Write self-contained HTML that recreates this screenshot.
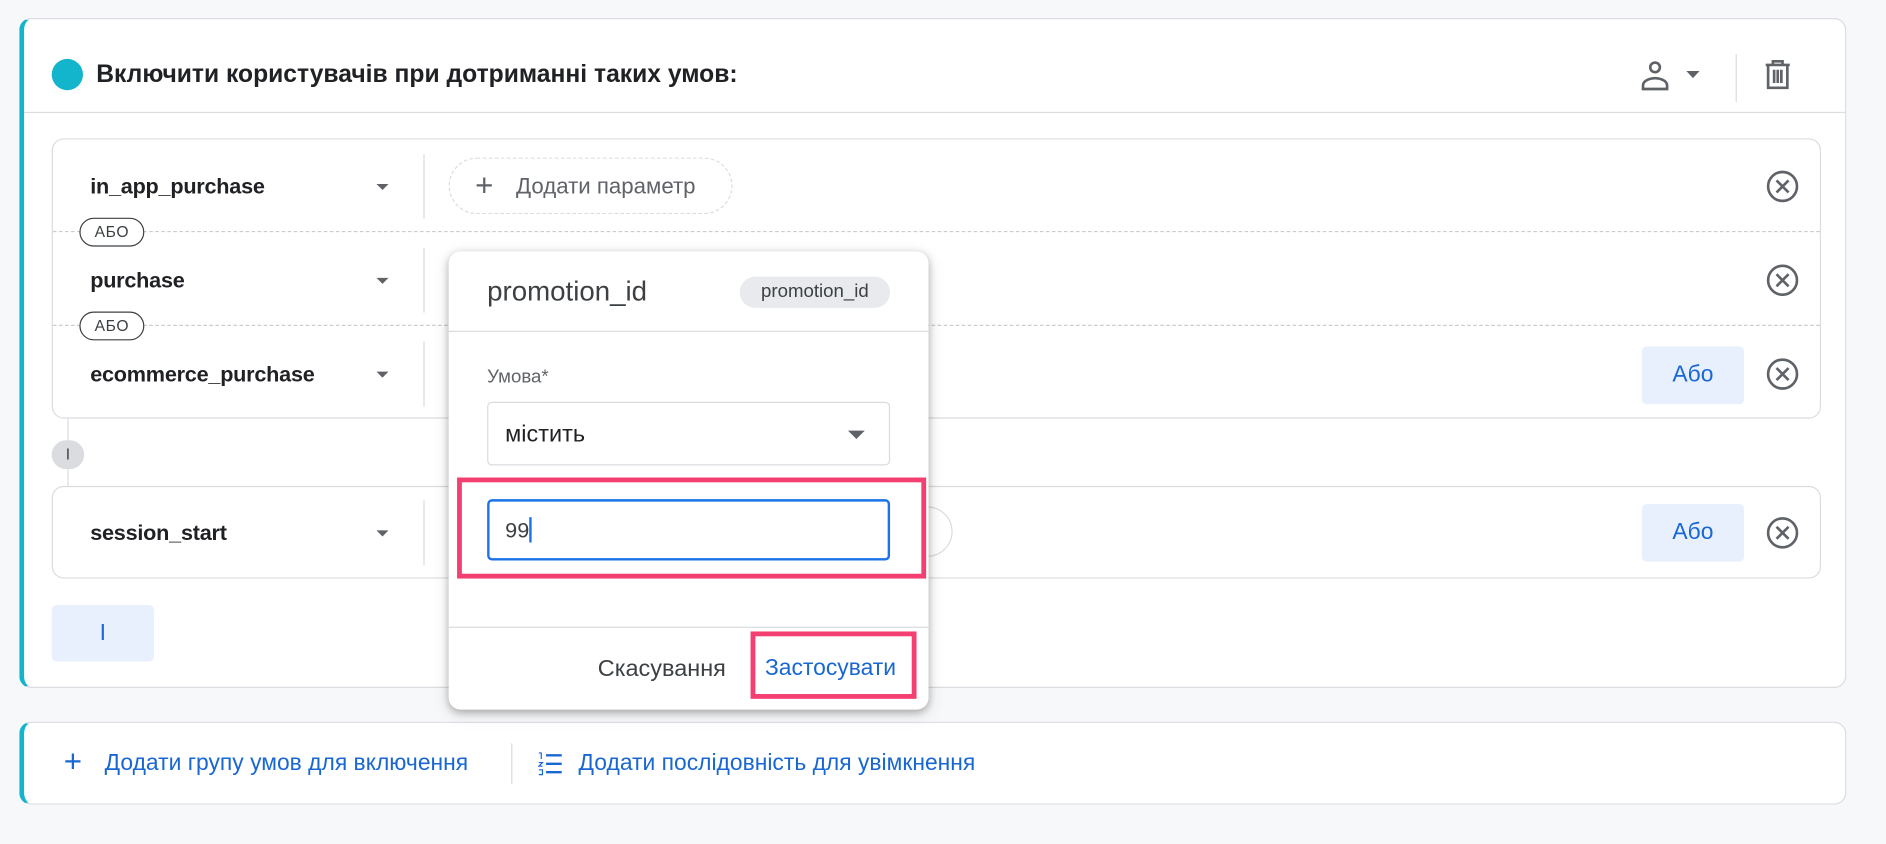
<!DOCTYPE html>
<html><head><meta charset="utf-8"><style>
*{box-sizing:border-box;margin:0;padding:0}
html,body{width:1886px;height:844px;overflow:hidden;background:#f7f8f9}
#w{position:absolute;left:0;top:0;width:1568px;height:702px;transform:scale(1.2028);transform-origin:0 0;font-family:"Liberation Sans","Noto Sans CJK SC",sans-serif;color:#202124}
.a{position:absolute}
.card{background:#fff;border:1px solid #dadce0;border-left:4px solid #12b5cb;border-radius:10px}
.box{background:#fff;border:1px solid #dadce0;border-radius:10px}
.ev{font-size:18px;font-weight:bold;color:#202124;letter-spacing:-.2px}
.car{width:0;height:0;border-left:5px solid transparent;border-right:5px solid transparent;border-top:5px solid #5f6368}
.sep{width:1px;background:#dadce0}
.dash{height:0;border-top:1px dashed #ccc}
.abo{border:1px solid #3c4043;border-radius:12px;font-size:13px;color:#3c4043;text-align:center;line-height:21px;background:#fff;letter-spacing:.5px}
.btn{background:#e8f0fe;color:#1967d2;border-radius:4px;font-size:19px;text-align:center}
</style></head><body><div id="w">

<div class="a card" style="left:16px;top:15px;width:1519px;height:557px"></div>
<div class="a" style="left:43px;top:49px;width:26px;height:26px;border-radius:50%;background:#12b5cb"></div>
<div class="a" style="left:80px;top:50px;font-size:20.5px;font-weight:bold;color:#202124">Включити користувачів при дотриманні таких умов:</div>
<svg class="a" style="left:1363px;top:50px" width="60" height="26" viewBox="0 0 60 26"><circle cx="13" cy="6" r="4" fill="none" stroke="#5f6368" stroke-width="2.2"/><path d="M3 24v-3c0-4 6-6 10-6s10 2 10 6v3z" fill="none" stroke="#5f6368" stroke-width="2.2"/><path d="M39 9h11l-5.5 6z" fill="#5f6368"/></svg>
<div class="a sep" style="left:1443px;top:45px;height:40px"></div>
<svg class="a" style="left:1466px;top:49px" width="24" height="26" viewBox="0 0 24 26"><path d="M2 5h20M8 5V2h8v3M4 5v19h16V5M9 9v11M12 9v11M15 9v11" fill="none" stroke="#5f6368" stroke-width="2.2"/></svg>
<div class="a" style="left:20px;top:93px;width:1514px;height:1px;background:#dadce0"></div>

<div class="a box" style="left:43px;top:115px;width:1471px;height:233px"></div>
<div class="a dash" style="left:44px;top:192px;width:1469px"></div>
<div class="a dash" style="left:44px;top:270px;width:1469px"></div>
<div class="a ev" style="left:75px;top:145px">in_app_purchase</div>
<div class="a ev" style="left:75px;top:223px">purchase</div>
<div class="a ev" style="left:75px;top:301px">ecommerce_purchase</div>
<div class="a car" style="left:313px;top:153px"></div>
<div class="a car" style="left:313px;top:231px"></div>
<div class="a car" style="left:313px;top:309px"></div>
<div class="a sep" style="left:352px;top:128px;height:54px"></div>
<div class="a sep" style="left:352px;top:206px;height:54px"></div>
<div class="a sep" style="left:352px;top:284px;height:54px"></div>
<div class="a abo" style="left:66px;top:181px;width:54px;height:24px">АБО</div>
<div class="a abo" style="left:66px;top:259px;width:54px;height:24px">АБО</div>
<div class="a" style="left:373px;top:131px;width:236px;height:47px;border:1px dashed #dadce0;border-radius:24px"></div>
<div class="a" style="left:395px;top:141px;font-size:26px;color:#5f6368;line-height:26px">+</div>
<div class="a" style="left:429px;top:144px;font-size:18.5px;color:#5f6368">Додати параметр</div>
<svg class="a" style="left:1468px;top:141px" width="28" height="28" viewBox="0 0 28 28"><circle cx="14" cy="14" r="12" fill="none" stroke="#5f6368" stroke-width="2.2"/><path d="M9 9l10 10M19 9L9 19" stroke="#5f6368" stroke-width="2.2"/></svg>
<svg class="a" style="left:1468px;top:219px" width="28" height="28" viewBox="0 0 28 28"><circle cx="14" cy="14" r="12" fill="none" stroke="#5f6368" stroke-width="2.2"/><path d="M9 9l10 10M19 9L9 19" stroke="#5f6368" stroke-width="2.2"/></svg>
<svg class="a" style="left:1468px;top:297px" width="28" height="28" viewBox="0 0 28 28"><circle cx="14" cy="14" r="12" fill="none" stroke="#5f6368" stroke-width="2.2"/><path d="M9 9l10 10M19 9L9 19" stroke="#5f6368" stroke-width="2.2"/></svg>
<div class="a btn" style="left:1365px;top:288px;width:85px;height:48px;line-height:48px">Або</div>

<div class="a" style="left:56px;top:348px;width:1px;height:57px;background:#dadce0"></div>
<div class="a" style="left:43px;top:366px;width:27px;height:24px;border-radius:12px;background:#dadce0;font-size:13px;text-align:center;line-height:24px;color:#3c4043">І</div>

<div class="a box" style="left:43px;top:404px;width:1471px;height:77px"></div>
<div class="a ev" style="left:75px;top:433px">session_start</div>
<div class="a car" style="left:313px;top:441px"></div>
<div class="a sep" style="left:352px;top:416px;height:54px"></div>
<div class="a" style="left:700px;top:421px;width:92px;height:42px;border:1px solid #dadce0;border-radius:21px"></div>
<div class="a btn" style="left:1365px;top:419px;width:85px;height:48px;line-height:48px">Або</div>
<svg class="a" style="left:1468px;top:429px" width="28" height="28" viewBox="0 0 28 28"><circle cx="14" cy="14" r="12" fill="none" stroke="#5f6368" stroke-width="2.2"/><path d="M9 9l10 10M19 9L9 19" stroke="#5f6368" stroke-width="2.2"/></svg>
<div class="a btn" style="left:43px;top:503px;width:85px;height:47px;line-height:47px">І</div>

<div class="a card" style="left:16px;top:600px;width:1519px;height:69px"></div>
<div class="a" style="left:53px;top:620px;font-size:26px;color:#1967d2;line-height:26px">+</div>
<div class="a" style="left:87px;top:624px;font-size:19px;color:#1967d2">Додати групу умов для включення</div>
<div class="a sep" style="left:425px;top:618px;height:34px"></div>
<svg class="a" style="left:447px;top:625px" width="22" height="20" viewBox="0 0 22 20"><path d="M7 3h13M7 10h13M7 17h13" stroke="#1967d2" stroke-width="2"/><path d="M1 1h2v5M1 9h3l-3 3h3M1 15h3v4H1" stroke="#1967d2" stroke-width="1" fill="none"/></svg>
<div class="a" style="left:481px;top:624px;font-size:19px;color:#1967d2">Додати послідовність для увімкнення</div>

<div class="a" style="left:373px;top:209px;width:399px;height:381px;background:#fff;border-radius:10px;box-shadow:0 2px 6px rgba(0,0,0,.25),0 4px 14px rgba(0,0,0,.12)"></div>
<div class="a" style="left:405px;top:229px;font-size:23px;color:#3c4043">promotion_id</div>
<div class="a" style="left:615px;top:230px;width:125px;height:26px;border-radius:13px;background:#e8eaed;font-size:15.5px;color:#3c4043;text-align:center;line-height:26px">promotion_id</div>
<div class="a" style="left:373px;top:275px;width:399px;height:1px;background:#dadce0"></div>
<div class="a" style="left:405px;top:305px;font-size:15.5px;color:#5f6368">Умова*</div>
<div class="a" style="left:405px;top:334px;width:335px;height:53px;border:1px solid #dadce0;border-radius:4px"></div>
<div class="a" style="left:420px;top:350px;font-size:19.5px;color:#202124">містить</div>
<div class="a car" style="left:705px;top:358px;border-left-width:7px;border-right-width:7px;border-top-width:7px"></div>
<div class="a" style="left:380px;top:397px;width:390px;height:84px;border:4px solid #f43f72"></div>
<div class="a" style="left:405px;top:415px;width:335px;height:51px;border:2px solid #1a73e8;border-radius:4px"></div>
<div class="a" style="left:420px;top:430px;font-size:18px;color:#3c4043">99<span style="display:inline-block;width:1.5px;height:21px;background:#1a73e8;vertical-align:-4px"></span></div>
<div class="a" style="left:373px;top:521px;width:399px;height:1px;background:#dadce0"></div>
<div class="a" style="left:497px;top:545px;font-size:19.5px;color:#3c4043">Скасування</div>
<div class="a" style="left:624px;top:525px;width:138px;height:56px;border:4px solid #f43f72"></div>
<div class="a" style="left:636px;top:545px;font-size:19px;color:#1967d2">Застосувати</div>

</div></body></html>
